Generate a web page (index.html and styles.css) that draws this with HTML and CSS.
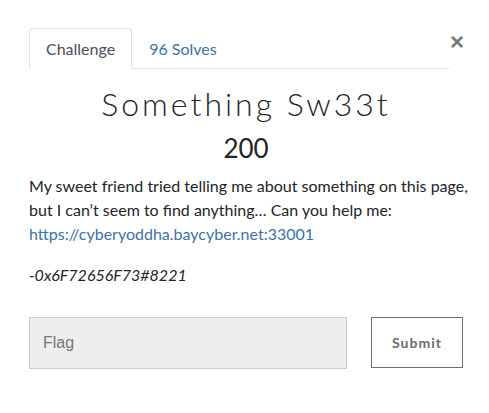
FILE: index.html
```html
<!DOCTYPE html>
<html>
<head>
<meta charset="utf-8">
<link rel="stylesheet" href="styles.css">
</head>
<body>
<div class="modal">
  <div class="header">
    <ul class="tabs">
      <li class="tab active">Challenge</li>
      <li class="tab">96 Solves</li>
    </ul>
    <button class="close" aria-label="Close">&times;</button>
  </div>
  <h2 class="title">Something Sw33t</h2>
  <h3 class="points">200</h3>
  <p class="desc">My sweet friend tried telling me about something on this page, but I can’t seem to find anything… Can you help me: <a class="link" href="#">https://cyberyoddha.baycyber.net:33001</a></p>
  <p class="author">-0x6F72656F73#8221</p>
  <form class="flag-form">
    <input class="flag-input" type="text" placeholder="Flag">
    <button class="submit" type="button">Submit</button>
  </form>
</div>
</body>
</html>
```
FILE: styles.css
```css
html, body {
  margin: 0;
  padding: 0;
  background: #fff;
}
body {
  font-family: Lato, "Noto Sans", sans-serif;
  color: #212529;
}
.modal {
  padding: 28px 12px 0 29px;
}
.header {
  display: flex;
  align-items: flex-start;
}
.tabs {
  list-style: none;
  margin: 0;
  padding: 0;
  display: flex;
  width: 420px;
  border-bottom: 1px solid #dee2e6;
}
.tab {
  font-size: 16px;
  line-height: 23px;
  padding: 8px 16px;
  margin-bottom: -1px;
  color: #3b73a8;
  border: 1px solid transparent;
  border-radius: 4px 4px 0 0;
}
.tab.active {
  color: #495057;
  border-color: #dee2e6 #dee2e6 #fff;
  background: #fff;
}
.close {
  margin-left: 1px;
  margin-top: 2px;
  border: 0;
  background: none;
  padding: 0;
  font-family: "Liberation Sans", Arial, sans-serif;
  font-size: 24px;
  font-weight: bold;
  line-height: 24px;
  color: #777;
  width: 14px;
}
.title {
  margin: 15px 14px 0 0;
  text-align: center;
  font-family: Lato, sans-serif;
  font-weight: 300;
  font-size: 32px;
  line-height: 40px;
  letter-spacing: 3px;
  color: #212529;
}
.points {
  margin: 7px 14px 0 0;
  text-align: center;
  font-weight: 400;
  font-size: 26px;
  line-height: 34px;
  color: #212529;
}
.desc {
  margin: 9px 0 0;
  font-size: 16px;
  line-height: 24px;
}
.link {
  color: #3b73a8;
  text-decoration: none;
}
.author {
  margin: 17px 0 0;
  font-size: 16px;
  line-height: 24px;
  font-style: italic;
}
.flag-form {
  display: flex;
  gap: 24px;
  margin-top: 30px;
}
.flag-input {
  box-sizing: border-box;
  width: 318px;
  height: 52px;
  background: #eeeeee;
  border: 1px solid #cccccc;
  padding: 0 13px;
  font-family: "Liberation Sans", Arial, sans-serif;
  font-size: 16px;
  color: #333;
  outline: none;
}
.flag-input::placeholder {
  color: #777;
}
.submit {
  box-sizing: border-box;
  width: 92px;
  height: 51px;
  background: #fff;
  border: 1px solid #707070;
  font-family: Lato, sans-serif;
  font-weight: 700;
  font-size: 14px;
  letter-spacing: 1px;
  color: #6c6c6c;
  padding: 0;
}
```
